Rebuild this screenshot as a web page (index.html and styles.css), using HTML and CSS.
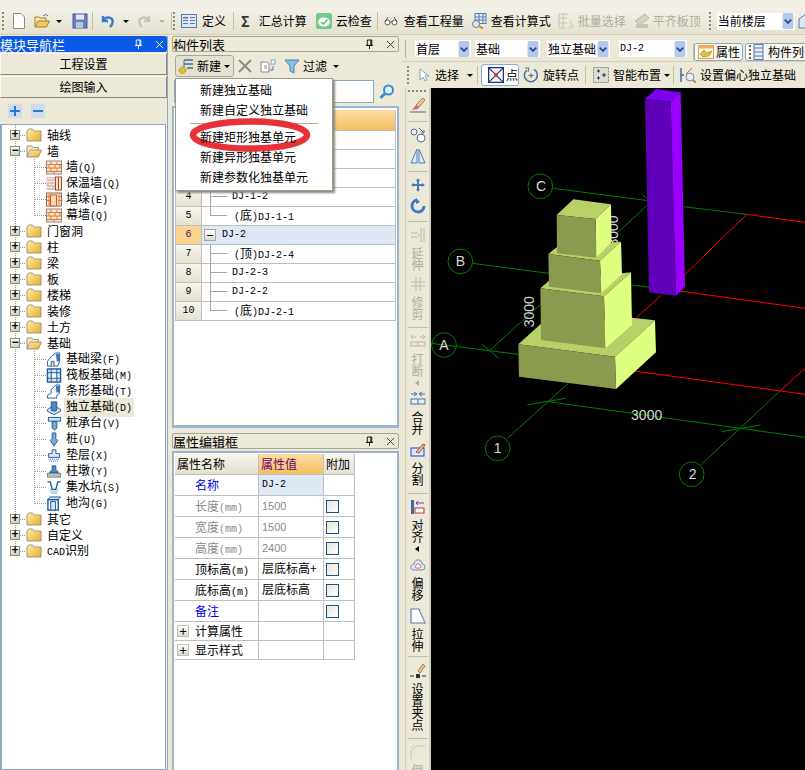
FILE: index.html
```html
<!DOCTYPE html>
<html lang="zh">
<head>
<meta charset="utf-8">
<title>独立基础</title>
<link rel="stylesheet" href="styles.css">
</head>
<body>
<svg class="defs" width="0" height="0">
  <defs>
    <linearGradient id="gf" x1="0" y1="0" x2="1" y2="1"><stop offset="0" stop-color="#fff2b0"/><stop offset="1" stop-color="#e8a820"/></linearGradient>
    <linearGradient id="gb" x1="0" y1="0" x2="0" y2="1"><stop offset="0" stop-color="#ffffff"/><stop offset="1" stop-color="#c4d4e8"/></linearGradient>
    <symbol id="fc" viewBox="0 0 16 14"><path d="M1 3 V13 H15 V3 H8 L6.500 1 H2.500 Z" fill="url(#gf)" stroke="#a09878"/></symbol>
    <symbol id="fo" viewBox="0 0 16 14"><path d="M1 13 V2 H6 L7 3.500 H12.500 V6" fill="#f4e9c4" stroke="#a09878"/><path d="M1 13 L4 6 H15.500 L12.500 13 Z" fill="url(#gf)" stroke="#a09878"/></symbol>
    <symbol id="brick" viewBox="0 0 16 14"><rect x=".5" y=".5" width="15" height="13" fill="#fde2cc" stroke="#8a8a8a"/><path d="M1 4 H15 M1 7.500 H15 M1 11 H15 M5 1 V4 M11 1 V4 M3 4 V7.500 M9 4 V7.500 M14 4 V7.500 M5 7.500 V11 M11 7.500 V11 M8 11 V13" stroke="#e07838" fill="none"/></symbol>
    <symbol id="insul" viewBox="0 0 16 14"><rect x=".5" y=".5" width="9" height="13" fill="#e0c0b8"/><path d="M2 2 H8 M1 5 H9 M3 8 H9 M1 11 H7" stroke="#fff" fill="none" stroke-dasharray="2 1"/><rect x="9.500" y=".5" width="6" height="13" fill="#fde2cc" stroke="#a05030"/><path d="M12.500 1 V13" stroke="#a05030"/></symbol>
    <symbol id="pier" viewBox="0 0 16 14"><rect x=".5" y=".5" width="15" height="13" fill="#fde2cc" stroke="#8a6a50"/><path d="M1 4 H4 M12 4 H15 M1 8 H4 M12 8 H15 M13 1 V13 M3 1 V13" stroke="#e07838" fill="none"/><rect x="4.500" y="2.500" width="6" height="11" fill="#fbd8b8" stroke="#d05820"/></symbol>
    <symbol id="beam" viewBox="0 0 16 16"><path d="M1 15 V10 L5 5 L10 1 H14 V10 L12 15 Z" fill="#fff" stroke="#1f5a9a"/><path d="M10 2 L13.500 2 V10 L11 10 Z" fill="#3a78b8"/><path d="M5 15 V10 H8 V15" fill="#cfe0f0" stroke="#1f5a9a"/></symbol>
    <symbol id="raft" viewBox="0 0 16 16"><rect x="1" y="1" width="14" height="14" fill="#dce8f4" stroke="#1f5a9a" stroke-width="1.500"/><path d="M5 1 V15 M11 1 V15 M1 5 H15 M1 11 H15" stroke="#1f5a9a"/><rect x="6" y="6" width="4" height="4" fill="#fff"/></symbol>
    <symbol id="strip" viewBox="0 0 16 16"><path d="M1 15 V12 L5 10 V6 L10 1 H14 V10 L11 12 V15 Z" fill="#fff" stroke="#1f5a9a"/><path d="M10 2 H13.500 V9 L10.500 9 Z" fill="#3a78b8"/></symbol>
    <symbol id="iso" viewBox="0 0 16 16"><path d="M1 10 L8 6 L15 10 V12 L8 15.500 L1 12 Z" fill="#dce8f4" stroke="#1f5a9a"/><path d="M5 2 H11 V11 L8 12 L5 11 Z" fill="#4c88c4" stroke="#1f5a9a"/></symbol>
    <symbol id="cap" viewBox="0 0 16 16"><rect x="2" y="1.500" width="13" height="4" fill="#cfe0f0" stroke="#1f5a9a"/><path d="M6 6 H11 V13 L8.500 15 L6 13 Z" fill="#7aa8d8" stroke="#1f5a9a"/></symbol>
    <symbol id="pile" viewBox="0 0 16 16"><path d="M6 1 H10 V7 L12 9 L8 15 L4 9 L6 7 Z" fill="#7aa8d8" stroke="#1f5a9a"/></symbol>
    <symbol id="pad" viewBox="0 0 16 16"><path d="M6 2 H10 V6 H14 V10 H2 V6 H6 Z" fill="#dce8f4" stroke="#1f5a9a"/><path d="M2 12 H14 M3 14 H13" stroke="#1f5a9a" stroke-dasharray="1 1"/></symbol>
    <symbol id="pdest" viewBox="0 0 16 16"><path d="M6 2 H10 V6 L13 9 H3 L6 6 Z" fill="#4c88c4" stroke="#1f5a9a"/><rect x="1" y="10" width="14" height="4" fill="#c0c0c0" stroke="#808080"/></symbol>
    <symbol id="pit" viewBox="0 0 16 16"><path d="M1 2 H4 L6 10 H10 L12 2 H15" fill="none" stroke="#1f5a9a" stroke-width="1.500"/><path d="M2 8 L5 15 H11 L14 8 L10 11 H6 Z" fill="#bcd8f0"/></symbol>
    <symbol id="ditch" viewBox="0 0 16 16"><path d="M1 4 L4 1 H15 L12 4 Z" fill="#cfe0f0" stroke="#1f5a9a"/><rect x="1.500" y="4" width="11" height="11" fill="#fff" stroke="#1f5a9a" stroke-width="1.500"/><rect x="4.500" y="6" width="5" height="9" fill="#dce8f4" stroke="#1f5a9a"/></symbol>
    <symbol id="pin" viewBox="0 0 10 12"><path d="M2.500 1 H7.500 V7 H2.500 Z M1 7 H9 M5 7 V11 M6.500 1 V7" fill="none" stroke="currentColor" stroke-width="1"/></symbol>
    <symbol id="close" viewBox="0 0 10 10"><path d="M1 1 L9 9 M9 1 L1 9" stroke="currentColor"/></symbol>
    <symbol id="chev" viewBox="0 0 12 17"><rect width="12" height="17" rx="2" fill="#b4c8ee"/><path d="M2.500 7 L6 10.500 L9.500 7" stroke="#2c4f8c" stroke-width="2" fill="none"/></symbol>
  </defs>
</svg>

<div class="topstrip"></div>

<div class="tb1">
  <span class="grip"></span>
  <svg class="ic ml8" viewBox="0 0 14 16"><path d="M1.500 .5 H9 L12.500 4 V15.500 H1.500 Z" fill="#fff" stroke="#8a8a8a"/></svg>
  <svg class="ic16 ml8" viewBox="0 0 16 16"><path d="M1 14 V4 H5 L6 5 H12 V8" fill="#f8e8b0" stroke="#a08030"/><path d="M1 14 L4 8 H15.500 L12.500 14 Z" fill="#f2c860" stroke="#a08030"/><path d="M9 3 Q12 0 14 3" stroke="#4a80c0" fill="none"/></svg>
  <span class="drop ml6"></span>
  <svg class="ic16 ml10" viewBox="0 0 16 16"><rect x="1" y="1" width="14" height="14" fill="#6c80c0" stroke="#485898"/><rect x="4" y="1.500" width="8" height="5" fill="#e4e8f4"/><rect x="4" y="9" width="7" height="6" fill="#b8c4e0"/></svg>
  <span class="vsep ml4"></span>
  <svg class="ic16 ml6" viewBox="0 0 16 16"><path d="M4 3 V8 H9 M4 8 Q8 2 13 6 Q15 10 11 14" fill="none" stroke="#3c7cc4" stroke-width="2.500"/></svg>
  <span class="drop ml8"></span>
  <svg class="ic16 ml8" viewBox="0 0 16 16"><path d="M12 3 V8 H7 M12 8 Q8 2 3 6 Q1 10 5 14" fill="none" stroke="#c4c4b8" stroke-width="2.500"/></svg>
  <span class="drop dim ml6"></span>
  <span class="vsep ml6"></span>
  <span class="grip ml1"></span>
  <svg class="ic16 ml6" viewBox="0 0 16 14"><rect x=".5" y=".5" width="15" height="13" fill="#dce6f4" stroke="#5a7ca8"/><rect x="2" y="3" width="5" height="1.500" fill="#5a7ca8"/><path d="M2 6.500 H7 M2 9.500 H7 M9 3.500 H14 M9 6.500 H14 M9 9.500 H14" stroke="#5a7ca8"/></svg>
  <span class="lbl ml5">定义</span>
  <span class="vsep ml7"></span>
  <span class="sigma ml7">Σ</span>
  <span class="lbl ml9">汇总计算</span>
  <svg class="ic16 ml9" viewBox="0 0 16 16"><rect width="16" height="16" rx="2" fill="#70cc88"/><ellipse cx="8" cy="9" rx="6" ry="4.500" fill="#fff"/><path d="M5 9 L7.500 11 L11.500 6.500" fill="none" stroke="#60b878" stroke-width="1.500"/></svg>
  <span class="lbl ml4">云检查</span>
  <span class="vsep ml5"></span>
  <svg class="ic14 ml6" viewBox="0 0 14 10"><circle cx="3.500" cy="6.500" r="2.500" fill="#fff" stroke="#555"/><circle cx="10.500" cy="6.500" r="2.500" fill="#fff" stroke="#555"/><path d="M1 6 L4 1 M13 6 L10 1 M6 6 H8" stroke="#555" fill="none"/></svg>
  <span class="lbl ml6">查看工程量</span>
  <svg class="ic16 ml7" viewBox="0 0 16 16"><rect x="4" y=".5" width="11" height="10" fill="#e4ecf8" stroke="#5a7ca8"/><path d="M4 4 H15 M4 7 H15 M8 1 V10 M12 1 V10" stroke="#5a7ca8"/><circle cx="5" cy="11" r="3.500" fill="#d8e4f0" stroke="#7a7a7a"/><path d="M8 13 L12 15.500" stroke="#c88830" stroke-width="2"/></svg>
  <span class="lbl ml4">查看计算式</span>
  <svg class="ic16 ml7" viewBox="0 0 16 16"><path d="M1 1 H10 M1 1 V15 M1 5 H9 M1 10 H9 M1 15 H8 M5 1 V15 M12 8 L15 14 H11" fill="none" stroke="#c4c2b4"/></svg>
  <span class="lbl off ml4">批量选择</span>
  <svg class="ic16 ml8" viewBox="0 0 16 16"><path d="M1 8 L11 1 L15 5 L6 12 Z" fill="#d4d2c6" stroke="#b8b6a8"/><rect x="2" y="11" width="12" height="4" fill="#c4c2b4"/></svg>
  <span class="lbl off ml3">平齐板顶</span>
  <span class="grip ml8"></span>
  <span class="combo floor ml6"><span class="ctext">当前楼层</span><svg class="chev" viewBox="0 0 12 17"><use href="#chev"/></svg></span>
  <svg class="ic16 ml3" viewBox="0 0 16 16"><path d="M1 6 L8 1 L15 6 V15 H1 Z" fill="#dce8f4" stroke="#5a7ca8"/></svg>
</div>

<div class="main">
  <aside class="nav">
    <div class="title active"><span class="t">模块导航栏</span><span class="pins"><svg class="pinic" viewBox="0 0 10 12"><use href="#pin"/></svg><svg class="xic" viewBox="0 0 10 10"><use href="#close"/></svg></span></div>
    <button class="bigbtn">工程设置</button>
    <button class="bigbtn">绘图输入</button>
    <div class="navtools">
      <span class="sq"><span class="plus"></span></span>
      <span class="sq"><span class="minus"></span></span>
    </div>
    <div class="tree">
      <div class="row"><span class="exp">+</span><span class="dash"></span><svg class="fold"><use href="#fc"/></svg><span class="nm">轴线</span></div>
      <div class="row"><span class="exp">−</span><span class="dash"></span><svg class="fold"><use href="#fo"/></svg><span class="nm">墙</span></div>
      <div class="kids">
        <div class="kid"><span class="kdash"></span><svg class="kic"><use href="#brick"/></svg><span class="nm">墙<span class="m">(Q)</span></span></div>
        <div class="kid"><span class="kdash"></span><svg class="kic"><use href="#insul"/></svg><span class="nm">保温墙<span class="m">(Q)</span></span></div>
        <div class="kid"><span class="kdash"></span><svg class="kic"><use href="#pier"/></svg><span class="nm">墙垛<span class="m">(E)</span></span></div>
        <div class="kid"><span class="kdash"></span><svg class="kic"><use href="#brick"/></svg><span class="nm">幕墙<span class="m">(Q)</span></span></div>
      </div>
      <div class="row"><span class="exp">+</span><span class="dash"></span><svg class="fold"><use href="#fc"/></svg><span class="nm">门窗洞</span></div>
      <div class="row"><span class="exp">+</span><span class="dash"></span><svg class="fold"><use href="#fc"/></svg><span class="nm">柱</span></div>
      <div class="row"><span class="exp">+</span><span class="dash"></span><svg class="fold"><use href="#fc"/></svg><span class="nm">梁</span></div>
      <div class="row"><span class="exp">+</span><span class="dash"></span><svg class="fold"><use href="#fc"/></svg><span class="nm">板</span></div>
      <div class="row"><span class="exp">+</span><span class="dash"></span><svg class="fold"><use href="#fc"/></svg><span class="nm">楼梯</span></div>
      <div class="row"><span class="exp">+</span><span class="dash"></span><svg class="fold"><use href="#fc"/></svg><span class="nm">装修</span></div>
      <div class="row"><span class="exp">+</span><span class="dash"></span><svg class="fold"><use href="#fc"/></svg><span class="nm">土方</span></div>
      <div class="row"><span class="exp">−</span><span class="dash"></span><svg class="fold"><use href="#fo"/></svg><span class="nm">基础</span></div>
      <div class="kids">
        <div class="kid"><span class="kdash"></span><svg class="kic"><use href="#beam"/></svg><span class="nm">基础梁<span class="m">(F)</span></span></div>
        <div class="kid"><span class="kdash"></span><svg class="kic"><use href="#raft"/></svg><span class="nm">筏板基础<span class="m">(M)</span></span></div>
        <div class="kid"><span class="kdash"></span><svg class="kic"><use href="#strip"/></svg><span class="nm">条形基础<span class="m">(T)</span></span></div>
        <div class="kid"><span class="kdash"></span><svg class="kic"><use href="#iso"/></svg><span class="nm sel">独立基础<span class="m">(D)</span></span></div>
        <div class="kid"><span class="kdash"></span><svg class="kic"><use href="#cap"/></svg><span class="nm">桩承台<span class="m">(V)</span></span></div>
        <div class="kid"><span class="kdash"></span><svg class="kic"><use href="#pile"/></svg><span class="nm">桩<span class="m">(U)</span></span></div>
        <div class="kid"><span class="kdash"></span><svg class="kic"><use href="#pad"/></svg><span class="nm">垫层<span class="m">(X)</span></span></div>
        <div class="kid"><span class="kdash"></span><svg class="kic"><use href="#pdest"/></svg><span class="nm">柱墩<span class="m">(Y)</span></span></div>
        <div class="kid"><span class="kdash"></span><svg class="kic"><use href="#pit"/></svg><span class="nm">集水坑<span class="m">(S)</span></span></div>
        <div class="kid"><span class="kdash"></span><svg class="kic"><use href="#ditch"/></svg><span class="nm">地沟<span class="m">(G)</span></span></div>
      </div>
      <div class="row"><span class="exp">+</span><span class="dash"></span><svg class="fold"><use href="#fc"/></svg><span class="nm">其它</span></div>
      <div class="row"><span class="exp">+</span><span class="dash"></span><svg class="fold"><use href="#fc"/></svg><span class="nm">自定义</span></div>
      <div class="row"><span class="exp">+</span><span class="dash"></span><svg class="fold"><use href="#fc"/></svg><span class="nm"><span class="m">CAD</span>识别</span></div>
    </div>
  </aside>

  <section class="middle">
    <div class="title"><span class="t">构件列表</span><span class="pins"><svg class="pinic" viewBox="0 0 10 12"><use href="#pin"/></svg><svg class="xic" viewBox="0 0 10 10"><use href="#close"/></svg></span></div>
    <div class="ltools">
      <span class="newbtn">
        <svg class="ic16" viewBox="0 0 16 16"><path d="M6 2 H15 M6 6 H15 M9 10 H15" stroke="#4c6c94" stroke-width="1.500" fill="none"/><path d="M6 2 V10" stroke="#4c6c94"/><path d="M3 9 H6 V11 H8 V14 H6 V16 H3 V14 H1 V11 H3 Z" fill="#f0c030" stroke="#a08020" stroke-width=".5"/></svg>
        <span>新建</span><span class="drop"></span>
      </span>
      <svg class="ic14 ml4" viewBox="0 0 14 14"><path d="M1 1 L13 13 M13 1 L1 13" stroke="#8a8a80" stroke-width="1.800"/></svg>
      <svg class="ic16 ml8" viewBox="0 0 16 16"><path d="M1 4 H7 L9 6 V14 H1 Z" fill="#fff" stroke="#8a8a8a"/><path d="M4 8 H7 M4 10 H7" stroke="#8a8a8a"/><rect x="11" y="2" width="4" height="4" fill="#fff" stroke="#8aa0c0"/><path d="M13 8 V12 L10 12" stroke="#3c7cc4" fill="none"/></svg>
      <svg class="ic16 ml8" viewBox="0 0 16 16"><path d="M1 2 H15 L10 8 V15 L6 13 V8 Z" fill="#8ac0e8" stroke="#4880b0"/></svg>
      <span class="ml3">过滤</span><span class="drop ml6"></span>
    </div>
    <div class="search">
      <span class="input"></span>
      <svg class="ic16" viewBox="0 0 16 16"><circle cx="9.500" cy="6" r="4.500" fill="#e4f0fc" stroke="#3c8cd4" stroke-width="2"/><path d="M6 9.500 L1.500 14" stroke="#3c8cd4" stroke-width="3"/></svg>
    </div>
    <div class="listpanel">
      <div class="grid">
        <div class="gr"><span class="gi head"></span><span class="gc hot"></span></div>
        <div class="gr"><span class="gi">1</span><span class="gc"><span class="box">−</span><span class="m top">DJ-1</span></span></div>
        <div class="gr"><span class="gi">2</span><span class="gc"><span class="br"></span><span class="sp pr m">(<span class="han">顶</span>)DJ-1-4</span></span></div>
        <div class="gr"><span class="gi">3</span><span class="gc"><span class="br"></span><span class="sp m">DJ-1-3</span></span></div>
        <div class="gr"><span class="gi">4</span><span class="gc"><span class="br"></span><span class="sp m">DJ-1-2</span></span></div>
        <div class="gr"><span class="gi">5</span><span class="gc"><span class="br last"></span><span class="sp pr m">(<span class="han">底</span>)DJ-1-1</span></span></div>
        <div class="gr cur"><span class="gi now">6</span><span class="gc"><span class="box">−</span><span class="m top">DJ-2</span></span></div>
        <div class="gr"><span class="gi">7</span><span class="gc"><span class="br"></span><span class="sp pr m">(<span class="han">顶</span>)DJ-2-4</span></span></div>
        <div class="gr"><span class="gi">8</span><span class="gc"><span class="br"></span><span class="sp m">DJ-2-3</span></span></div>
        <div class="gr"><span class="gi">9</span><span class="gc"><span class="br"></span><span class="sp m">DJ-2-2</span></span></div>
        <div class="gr"><span class="gi">10</span><span class="gc"><span class="br last"></span><span class="sp pr m">(<span class="han">底</span>)DJ-2-1</span></span></div>
      </div>
    </div>
    <div class="title second"><span class="t">属性编辑框</span><span class="pins"><svg class="pinic" viewBox="0 0 10 12"><use href="#pin"/></svg><svg class="xic" viewBox="0 0 10 10"><use href="#close"/></svg></span></div>
    <div class="proppanel">
      <div class="props">
        <div class="ph">属性名称</div><div class="ph hotc">属性值</div><div class="ph">附加</div>
        <div class="p1 blue">名称</div><div class="p2 val m12">DJ-2</div><div class="p3"></div>
        <div class="p1 gray">长度<span class="m">(mm)</span></div><div class="p2 gray num">1500</div><div class="p3"><span class="chk"></span></div>
        <div class="p1 gray">宽度<span class="m">(mm)</span></div><div class="p2 gray num">1500</div><div class="p3"><span class="chk"></span></div>
        <div class="p1 gray">高度<span class="m">(mm)</span></div><div class="p2 gray num">2400</div><div class="p3"><span class="chk"></span></div>
        <div class="p1">顶标高<span class="m">(m)</span></div><div class="p2 up">层底标高+</div><div class="p3"><span class="chk"></span></div>
        <div class="p1">底标高<span class="m">(m)</span></div><div class="p2 up">层底标高</div><div class="p3"><span class="chk"></span></div>
        <div class="p1 blue">备注</div><div class="p2"></div><div class="p3"><span class="chk"></span></div>
        <div class="p0 short"><span class="box2">+</span>计算属性</div><div class="p2 short"></div><div class="p3 short"></div>
        <div class="p0 short"><span class="box2">+</span>显示样式</div><div class="p2 short"></div><div class="p3 short"></div>
      </div>
    </div>

    <div class="menu">
      <svg class="ring" viewBox="0 0 126 38"><ellipse cx="63" cy="19" rx="57" ry="13.500" fill="none" stroke="#e8323a" stroke-width="6.500"/></svg>
      <div class="mi">新建独立基础</div>
      <div class="mi">新建自定义独立基础</div>
      <div class="msep"></div>
      <div class="mi">新建矩形独基单元</div>
      <div class="mi">新建异形独基单元</div>
      <div class="mi">新建参数化独基单元</div>
    </div>
  </section>

  <section class="work">
    <div class="combos">
      <span class="grip2"></span>
      <span class="combo c1"><span class="ctext">首层</span><svg class="chev" viewBox="0 0 12 17"><use href="#chev"/></svg></span>
      <span class="combo c2"><span class="ctext">基础</span><svg class="chev" viewBox="0 0 12 17"><use href="#chev"/></svg></span>
      <span class="combo c3"><span class="ctext">独立基础</span><svg class="chev" viewBox="0 0 12 17"><use href="#chev"/></svg></span>
      <span class="combo c4"><span class="ctext m">DJ-2</span><svg class="chev" viewBox="0 0 12 17"><use href="#chev"/></svg></span>
      <span class="vsep sepc"></span>
      <span class="tab t1"><svg class="ic16" viewBox="0 0 16 14"><rect x=".5" y=".5" width="15" height="13" fill="#fff8e8" stroke="#e89848"/><rect x=".5" y=".5" width="15" height="3" fill="#f0b060"/><path d="M2 9 L6 5 L9 8 L14 6 L11 11 L5 12 Z" fill="#d8c848" stroke="#706020" stroke-width=".5"/></svg><span>属性</span></span>
      <span class="tab t2"><svg class="ic16" viewBox="0 0 16 16"><path d="M1 2 H3 M1 6 H3 M1 10 H3 M1 14 H3" stroke="#333" stroke-width="1.500"/><rect x="6" y=".5" width="9" height="15" fill="#e4ecf8" stroke="#5a7ca8"/><path d="M6 4 H15 M6 8 H15 M6 12 H15" stroke="#5a7ca8"/></svg><span>构件列</span></span>
    </div>
    <div class="drawtools">
      <span class="grip"></span>
      <svg class="ic14 ml8" viewBox="0 0 14 14"><path d="M3 1 V12 L6 9 L8 13 L10 12 L8 8 H12 Z" fill="#fff" stroke="#8aa0c0"/></svg>
      <span class="ml4">选择</span><span class="drop ml8"></span>
      <span class="vsep ml4"></span>
      <span class="pointbtn"><svg class="ic16" viewBox="0 0 14 14"><rect x=".5" y=".5" width="13" height="13" fill="#fff" stroke="#1c2c78" stroke-width="1.200"/><path d="M1 1 L13 13 M13 1 L1 13" stroke="#1c2c78"/><rect x="5.500" y="5.500" width="3" height="3" fill="#e02020"/></svg><span>点</span></span>
      <svg class="ic16 ml4" viewBox="0 0 16 16"><path d="M4 3 A6.500 6.500 0 1 0 11 2.500" fill="none" stroke="#4c6c94" stroke-width="1.500"/><path d="M2 1 L6 1 L5 5" fill="none" stroke="#4c6c94"/><path d="M8 6 V11 M5.500 8.500 H10.500" stroke="#4c6c94"/></svg>
      <span class="ml4">旋转点</span>
      <span class="vsep ml6"></span>
      <svg class="ic16 ml7" viewBox="0 0 16 16"><rect x=".5" y=".5" width="15" height="15" fill="#dcdcd0" stroke="#8a8a80" stroke-dasharray="2 1"/><path d="M4 4 H7 M5.500 2.500 V5.500 M9 8 H13 M11 6 V10 M4 11 H7 M5.500 9.500 V12.500" stroke="#203060"/></svg>
      <span class="ml4">智能布置</span><span class="drop ml3"></span>
      <span class="vsep ml3"></span>
      <svg class="ic16 ml6" viewBox="0 0 16 16"><path d="M1 1 V15 M1 8 H4" stroke="#3c6cb0" stroke-width="1.500"/><circle cx="10" cy="10" r="4" fill="#e4ecf4" stroke="#888"/><path d="M13 13 L16 16" stroke="#c88830" stroke-width="2"/><path d="M6 7 L12 1" stroke="#e06030"/></svg>
      <span class="ml4">设置偏心独立基础</span>
    </div>
    <div class="stage">
      <div class="vtools">
        <span class="hgrip"></span>
        <svg class="vi" viewBox="0 0 16 16"><path d="M13 1 L6 8 L9 10 L15 3 Z" fill="#f0d080" stroke="#a08050"/><path d="M6 8 L2 13 L8 12 L9 10 Z" fill="#d860a0"/><path d="M0 15 H16" stroke="#606060"/></svg>
        <span class="hsep h8"></span>
        <svg class="vi" viewBox="0 0 16 16"><circle cx="4" cy="5" r="3" fill="#e8ecf4" stroke="#5a7090"/><circle cx="11" cy="11" r="4" fill="#fff" stroke="#5a7090"/><path d="M9 1 L14 6 M14 3 V6 H11" stroke="#5a7090" fill="none"/></svg>
        <svg class="vi" viewBox="0 0 16 16"><path d="M7 1 V15 H1 Z M9 1 V15 H15 Z" fill="#dce6f4" stroke="#5a7cb8"/></svg>
        <span class="hsep"></span>
        <svg class="vi" viewBox="0 0 16 16"><path d="M8 1 L10 4 H9 V7 H12 V6 L15 8 L12 10 V9 H9 V12 H10 L8 15 L6 12 H7 V9 H4 V10 L1 8 L4 6 V7 H7 V4 H6 Z" fill="#4878b8"/></svg>
        <svg class="vi" viewBox="0 0 16 16"><path d="M7 2 A6 6 0 1 0 14 8" fill="none" stroke="#3c78d0" stroke-width="3"/><path d="M6 0 L10 4 L6 6 Z" fill="#3c78d0"/></svg>
        <span class="hsep"></span>
        <svg class="vi" viewBox="0 0 16 16"><path d="M1 6 H8 M1 10 H8 M11 1 V15 M14 1 V15 M8 8 H10" stroke="#b8b6a8" fill="none"/></svg>
        <span class="vt off">延伸</span>
        <svg class="vi" viewBox="0 0 16 16"><path d="M1 6 H15 M1 10 H15 M6 1 V15 M10 1 V15" stroke="#b8b6a8" fill="none"/></svg>
        <span class="vt off">修剪</span>
        <span class="hsep"></span>
        <svg class="vi" viewBox="0 0 16 16"><path d="M1 4 H6 M10 4 H15 M3 2 L1 4 L3 6 M13 2 L15 4 L13 6" stroke="#b8b6a8" fill="none"/><rect x="1" y="9" width="14" height="4" fill="none" stroke="#b8b6a8"/><path d="M8 9 V13" stroke="#b8b6a8"/></svg>
        <span class="vt off">打断</span>
        <span class="tri"></span>
        <svg class="vi" viewBox="0 0 16 16"><path d="M1 3 H6 M15 3 H10 M4 1 L7 3 L4 5 M12 1 L9 3 L12 5" stroke="#3c6cd0" fill="none"/><rect x="1" y="8" width="14" height="5" fill="#e8eef8" stroke="#5a7090"/><path d="M8 8 V13" stroke="#5a7090"/></svg>
        <span class="vt">合并</span>
        <svg class="vi v7" viewBox="0 0 16 16"><rect x="1" y="6" width="13" height="8" fill="#dce6f8" stroke="#2040e0"/><path d="M6 10 L13 2 L15 3 L9 11 Z" fill="#f0c080" stroke="#a05040"/></svg>
        <span class="vt">分割</span>
        <span class="hsep"></span>
        <svg class="vi" viewBox="0 0 16 16"><rect x="1" y="1" width="3" height="14" fill="#3c6c9c"/><path d="M6 4 H14 M8 2 L6 4 L8 6" stroke="#6040c0" fill="none"/><rect x="5" y="9" width="9" height="5" fill="#fff" stroke="#c03040"/></svg>
        <span class="vt">对齐</span>
        <span class="tri dark"></span>
        <svg class="vi" viewBox="0 0 16 14"><path d="M4 12 Q0 12 1 8 Q2 6 4 6 Q5 1 9 2 Q12 2 12 6 Q15 6 15 9 Q15 12 12 12 Z" fill="#dce6f4" stroke="#7a90b0"/><path d="M6 10 Q4 9 6 7 Q8 4 10 7 Q12 9 10 10 Z" fill="#fff" stroke="#e06868"/></svg>
        <span class="vt">偏移</span>
        <svg class="vi v7" viewBox="0 0 16 16"><path d="M1 1 H9 L15 15 H1 Z" fill="#fff" stroke="#5a7ca8" stroke-width="1.200"/><path d="M10 4 L15 15" stroke="#c0c0c0" stroke-dasharray="1 1"/></svg>
        <span class="vt">拉伸</span>
        <span class="hsep h4"></span>
        <svg class="vi v6" viewBox="0 0 16 16"><path d="M8 8 L13 1 L15 3 L10 10 Z" fill="#f0c080" stroke="#a08060"/><path d="M0 13 H4 M12 13 H16" stroke="#303030"/><rect x="6" y="11" width="4" height="4" fill="#303030"/></svg>
        <span class="vt">设置夹点</span>
        <span class="hsep"></span>
        <svg class="vi" viewBox="0 0 16 16"><path d="M1 15 V7 L7 2 H15 M1 4 L4 1" stroke="#c4c2b4" fill="none"/></svg>
        <span class="vt off">倒</span>
      </div>
      <svg class="scene" viewBox="0 0 1122 2046" preserveAspectRatio="xMinYMin meet">
        <g transform="translate(-3,-9)">
          <g fill="none" stroke="#008000" stroke-width="3">
            <path d="M370 310 L655 347 M760 365 L950 388"/>
            <path d="M128 535 L357 565 M605 600 L660 607"/>
            <path d="M5 775 L265 808"/>
            <path d="M232 1060 L415 895 M180 795 L330 660 M555 450 L655 358"/>
            <path d="M812 1140 L1050 918"/>
            <path d="M355 950 L1125 1057 M292 960 L407 940 M876 1040 L992 1020 M155 778 L207 820 M637 328 L660 350"/>
            <circle cx="42" cy="780" r="37"/><circle cx="91" cy="529" r="37"/><circle cx="331" cy="304" r="37"/><circle cx="203" cy="1090" r="37"/><circle cx="785" cy="1168" r="37"/>
          </g>
          <g fill="none" stroke="#ff0000" stroke-width="3">
            <path d="M950 388 L1125 412 M748 618 L1125 670 M612 858 L1125 928 M620 697 L695 630 M765 568 L950 388 M1050 918 L1125 850"/>
          </g>
          <g class="cad" fill="#d8d8d8">
            <text x="42" y="795" text-anchor="middle">A</text>
            <text x="91" y="544" text-anchor="middle">B</text>
            <text x="333" y="319" text-anchor="middle">C</text>
            <text x="203" y="1105" text-anchor="middle">1</text>
            <text x="788" y="1183" text-anchor="middle">2</text>
            <text x="650" y="1005" text-anchor="middle">3000</text>
            <text x="298" y="694" text-anchor="middle" transform="rotate(-90 298 680)">3000</text>
            <text x="550" y="452" text-anchor="middle" transform="rotate(-90 550 438)">3000</text>
          </g>
          <polygon points="645,42 678,12 752,22 722,50" fill="#7a00ee"/>
          <polygon points="645,42 722,50 738,632 657,622" fill="#6000b8"/>
          <polygon points="722,50 752,22 765,605 738,632" fill="#9900ff"/>
          <polygon points="265,778 332,717 606,698 675,706 555,815" fill="#b8d068"/>
          <polygon points="555,815 675,706 678,802 558,912" fill="#dfff80"/>
          <polygon points="265,778 555,815 558,912 267,875" fill="#8a9a4e"/>
          <polygon points="331,610 357,587 603,562 522,634" fill="#b8d068"/>
          <polygon points="522,634 603,562 606,720 526,790" fill="#dfff80"/>
          <polygon points="331,610 522,634 526,790 333,765" fill="#8a9a4e"/>
          <polygon points="355,507 380,487 573,470 510,527" fill="#b8d068"/>
          <polygon points="510,527 573,470 576,568 514,625" fill="#dfff80"/>
          <polygon points="355,507 510,527 514,625 357,605" fill="#8a9a4e"/>
          <polygon points="380,390 430,343 543,358 497,402" fill="#b8d068"/>
          <polygon points="497,402 543,358 545,470 499,518" fill="#dfff80"/>
          <polygon points="380,390 497,402 499,518 381,505" fill="#8a9a4e"/>
        </g>
      </svg>
    </div>
  </section>
</div>
</body>
</html>
```
FILE: styles.css
```css
* { box-sizing: border-box; }
html, body { margin: 0; padding: 0; }
body {
  width: 805px; height: 770px; overflow: hidden;
  background: #ece9d8; color: #000;
  font: 12px/16px "Noto Sans CJK SC", "Liberation Sans", sans-serif;
}
.defs { position: absolute; }
.m { font-family: "Liberation Mono", monospace; font-size: 10px; }
.han { font-family: "Noto Sans CJK SC", sans-serif; font-size: 12px; }
.ml1 { margin-left: 1px; } .ml2 { margin-left: 2px; } .ml3 { margin-left: 3px; } .ml4 { margin-left: 4px; } .ml5 { margin-left: 5px; }
.ml6 { margin-left: 6px; } .ml7 { margin-left: 7px; } .ml8 { margin-left: 8px; } .ml9 { margin-left: 9px; } .ml10 { margin-left: 10px; }

.topstrip { height: 8px; background: #f1efe6; }
.tb1 {
  height: 27px; display: flex; align-items: center; padding-left: 2px;
  background: linear-gradient(#f4f2e8, #e4e1cf); border-bottom: 1px solid #d4d0bc; white-space: nowrap; overflow: hidden;
}
.grip { flex: none; width: 2px; height: 18px; background: repeating-linear-gradient(#8a8878 0 2px, transparent 2px 4px); }
.vsep { flex: none; width: 1px; height: 18px; background: #c2bfa8; }
.ic { flex: none; width: 14px; height: 16px; }
.ic14 { flex: none; width: 14px; height: 14px; }
.ic16 { flex: none; width: 16px; height: 16px; }
.drop { flex: none; width: 0; height: 0; border: 3.5px solid transparent; border-top: 3.5px solid #000; border-bottom: 0; }
.drop.dim { border-top-color: #b4b2a4; }
.lbl { flex: none; }
.lbl.off { color: #aeac9e; }
.sigma { font-size: 14px; font-weight: 700; color: #333; width: 10px; }
.combo { flex: none; display: flex; align-items: center; justify-content: space-between; height: 17px; background: #fff; padding-right: 1px; }
.ctext { padding-left: 1px; }
.ctext.m { font-size: 10px; }
.chev { width: 12px; height: 16px; }
.floor { width: 78px; }

.main { display: flex; height: 735px; padding-top: 1px; }

.title {
  height: 16px; line-height: 15px; display: flex; justify-content: space-between; align-items: center; flex: none;
  border: 1px solid #a8a694; border-radius: 2px; background: #ece9d8; font-size: 13px; overflow: hidden;
}
.title.active { background: #0a5ae6; color: #fff; border: 0; }
.pins { display: flex; align-items: center; gap: 12px; padding-right: 3px; }
.pinic { width: 9px; height: 11px; color: #000; }
.active .pinic { color: #fff; }
.xic { width: 9px; height: 9px; color: #333; }
.active .xic { color: #fff; }

.nav { width: 168px; flex: none; display: flex; flex-direction: column; border-right: 1px solid #8fa8c4; }
.bigbtn {
  display: block; width: 167px; height: 22px; margin: 1px 0 0; padding: 0; flex: none;
  font: 12px/16px "Noto Sans CJK SC", sans-serif; color: #000;
  background: #ece9d8; border: 1px solid #8a8876; border-color: #fdfcf6 #8a8876 #8a8876 #fdfcf6;
}
.navtools { height: 26px; display: flex; align-items: center; gap: 9px; padding-left: 8px; flex: none; }
.sq { display: flex; align-items: center; justify-content: center; width: 14px; height: 14px; background: #cfdcf0; }
.plus { width: 10px; height: 10px; background: linear-gradient(#2c78c8, #2c78c8) center/10px 2px no-repeat, linear-gradient(#2c78c8, #2c78c8) center/2px 10px no-repeat; }
.minus { width: 10px; height: 2px; background: #2c78c8; }
.tree {
  flex: 1; margin-right: 1px; padding-top: 2px; background-color: #fff; border: 1px solid #8fa8c4; border-left-width: 2px;
  background-image: repeating-linear-gradient(#9a9a90 0 1px, transparent 1px 2px);
  background-size: 1px 424px; background-position: 13px 0; background-repeat: no-repeat;
}
.row { height: 16px; display: flex; align-items: center; padding-left: 8px; white-space: nowrap; }
.exp {
  flex: none; width: 10px; height: 10px; line-height: 8px; text-align: center; font-family: "Liberation Mono", monospace; font-size: 12px; font-weight: 700;
  background: linear-gradient(#fff, #d4d0bc); border: 1px solid #8a8a80;
}
.dash { flex: none; width: 5px; border-top: 1px dotted #9a9a90; }
.fold { flex: none; width: 16px; height: 14px; margin: 0 5px 0 1px; }
.nm { white-space: nowrap; }
.kids {
  background: repeating-linear-gradient(#9a9a90 0 1px, transparent 1px 2px) 32px 0/1px calc(100% - 8px) no-repeat;
}
.kid { height: 16px; display: flex; align-items: center; padding-left: 32px; white-space: nowrap; }
.kdash { flex: none; width: 12px; border-top: 1px dotted #9a9a90; }
.kic { flex: none; width: 16px; height: 15px; margin-right: 4px; }
.sel { background: #ece9d8; margin-left: -2px; padding: 0 2px; width: 70px; }

.middle { position: relative; width: 234px; flex: none; display: flex; flex-direction: column; padding: 0 3px 0 4px; }
.ltools { height: 27px; display: flex; align-items: center; padding: 1px 0 0 3px; flex: none; }
.newbtn { display: flex; align-items: center; gap: 3px; width: 59px; height: 22px; padding-left: 2px; background: #e4e1d0; border: 1px solid #a8a694; border-radius: 3px; }
.search { height: 25px; display: flex; align-items: center; gap: 5px; padding-left: 2px; flex: none; }
.input { width: 200px; height: 23px; background: #fff; border: 1px solid #8fa8c4; }
.listpanel { height: 322px; flex: none; margin-top: 2px; padding: 2px 1px; background: #fff; border: 2px solid #9db4cc; border-bottom-width: 3px; border-right-width: 2px; }
.grid { border: 1px solid #bfbfbf; border-bottom: 0; border-top: 0; }
.gr { display: flex; height: 19px; border-bottom: 1px solid #bfbfbf; }
.gr:first-child { height: 21px; }
.gi { flex: none; width: 26px; text-align: center; line-height: 18px; font-family: "Liberation Mono", monospace; font-size: 10px; background: linear-gradient(#f8f6ee, #e4e1d0); border-right: 1px solid #bfbfbf; }
.gi.head { background: linear-gradient(#f6f4ea, #e2dfcc); }
.gi.now { background: #fbd590; color: #6a0070; }
.gc { position: relative; flex: 1; display: flex; align-items: center; font-size: 12px; padding-left: 2px; }
.gc.hot { background: linear-gradient(#fbdca2, #f4c062); }
.cur .gc { background: #dfe8f5; }
.box { flex: none; display: inline-block; width: 12px; height: 12px; line-height: 9px; margin-right: 6px; text-align: center; font-size: 13px; background: linear-gradient(#fff, #dcdace); border: 1px solid #a8a8a0; }
.top { font-size: 10px; }
.br { position: relative; flex: none; width: 27px; height: 100%; margin-left: 6px; }
.br::before { content: ""; position: absolute; left: 0; top: -1px; bottom: -1px; width: 1px; background: #a8a8a0; }
.br::after { content: ""; position: absolute; left: 0; top: 8px; width: 17px; height: 1px; background: #a8a8a0; }
.br.last::before { bottom: 9px; }
.sp { margin-left: -5px; }
.sp.pr { margin-left: -3px; }

.second { margin-top: 5px; }
.proppanel { flex: 1; margin-top: 2px; padding: 1px 1px; background: #fff; border: 2px solid #9db4cc; border-bottom: 0; }
.props { display: grid; grid-template-columns: 84px 65px 31px; width: 180px; border-top: 0; }
.props > div { height: 21px; line-height: 20px; border-right: 1px solid #bfbfbf; border-bottom: 1px solid #bfbfbf; white-space: nowrap; }
.props .ph { background: linear-gradient(#f8f6ee, #e4e1d0); padding-left: 2px; }
.props .hotc { background: linear-gradient(#fbdca2, #f4c062); color: #6a0070; }
.p1 { padding-left: 20px; }
.p2 { padding-left: 3px; }
.p3 { display: flex; align-items: center; padding-left: 2px; }
.p0 { display: flex; align-items: center; padding-left: 2px; }
.props .short { height: 19px; line-height: 18px; }
.blue { color: #0000e8; }
.gray { color: #8a8a8a; }
.val { background: #dfe8f5; font-family: "Liberation Mono", monospace; font-size: 10px; }
.num { font-family: "Liberation Sans", sans-serif; font-size: 11px; }
.props .up { line-height: 17px; }
.chk { display: block; width: 13px; height: 13px; background: linear-gradient(135deg, #e8e6da, #fff); border: 1px solid #1c5180; }
.box2 { flex: none; width: 12px; height: 12px; line-height: 10px; margin-right: 6px; text-align: center; font-size: 13px; background: linear-gradient(#fff, #dcdace); border: 1px solid #bfbfbf; }

.menu {
  position: absolute; left: 7px; top: 42px; width: 158px; height: 113px; padding: 1px 0 0; background: #fff;
  border: 1px solid #9a9a90; box-shadow: 2px 2px 2px #8a8a80;
}
.mi { position: relative; z-index: 1; height: 20px; line-height: 20px; padding-left: 24px; white-space: nowrap; }
.msep { height: 1px; margin: 3px 14px 3px 14px; background: #b0ac98; }
.ring { position: absolute; left: 11px; top: 37px; width: 126px; height: 38px; }

.work { flex: 1; min-width: 0; display: flex; flex-direction: column; }
.combos { height: 26px; display: flex; align-items: flex-start; flex: none; padding-top: 4px; border-bottom: 1px solid #d4d0bc; white-space: nowrap; overflow: hidden; }
.grip2 { flex: none; width: 1px; height: 18px; background: #b0ae9c; margin-left: 3px; }
.c1 { width: 56px; margin-left: 9px; }
.c2 { width: 65px; margin-left: 4px; }
.c3 { width: 63px; margin-left: 7px; }
.c4 { width: 68px; margin-left: 9px; }
.sepc { margin: 3px 0 0 6px; }
.tab { flex: none; display: flex; align-items: center; height: 18px; margin-top: 3px; background: #f8f7ef; border: 1px solid #8fa8c4; border-radius: 3px; }
.t1 { width: 49px; gap: 2px; padding-left: 3px; }
.t2 { width: 70px; margin-left: 2px; gap: 4px; padding-left: 2px; }
.drawtools { height: 26px; display: flex; align-items: center; padding-left: 5px; flex: none; white-space: nowrap; overflow: hidden; }
.pointbtn { flex: none; display: flex; align-items: center; gap: 2px; width: 38px; height: 22px; margin-left: 3px; padding-left: 6px; background: #fff; border: 1px solid #8fa8c4; border-radius: 3px; }
.stage { flex: 1; min-height: 0; display: flex; overflow: hidden; }
.vtools { flex: none; width: 26px; margin-left: 3px; padding-top: 2px; display: flex; flex-direction: column; align-items: center; background: #ece9d8; border-left: 1px solid #d4d0bc; border-right: 2px solid #d4d0bc; overflow: hidden; }
.hgrip { flex: none; width: 20px; height: 2px; background: repeating-linear-gradient(90deg, #8a8878 0 2px, transparent 2px 4px); }
.hsep { flex: none; width: 20px; height: 1px; margin-top: 7px; background: #c2bfa8; }
.hsep.h8 { margin-top: 8px; }
.hsep.h4 { margin-top: 4px; }
.vi { flex: none; width: 16px; height: 16px; margin-top: 5px; }
.vi.v7 { margin-top: 7px; }
.vi.v6 { margin-top: 6px; }
.vt { flex: none; margin-top: 4px; width: 14px; line-height: 12px; font-size: 12px; text-align: center; word-break: break-all; }
.vt.off { color: #aeac9e; }
.tri { flex: none; width: 0; height: 0; margin: 3px 2px 0 0; border: 3.5px solid transparent; border-right: 4px solid #aeac9e; border-left: 0; }
.tri.dark { border-right-color: #000; }
.scene { flex: none; width: 374px; height: 682px; background: #000; display: block; }
.cad { font-family: "Liberation Sans", sans-serif; font-size: 42px; }
```
